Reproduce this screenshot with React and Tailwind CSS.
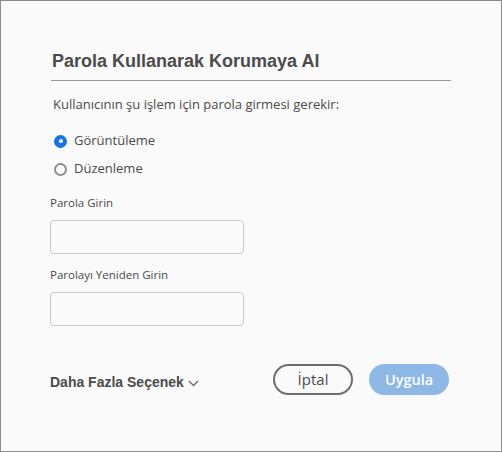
import { useState } from 'react'

const UI = "'Open Sans', 'Noto Sans', sans-serif"
const HEAD = "'Liberation Sans', Arial, sans-serif"

function Radio({ checked, label, onClick }) {
  return (
    <button type="button" onClick={onClick} className="flex items-center h-[28px] text-left">
      <span
        className={[
          'w-[13px] h-[13px] rounded-full box-border flex items-center justify-center ml-[4px]',
          checked ? 'bg-[#1473e6]' : 'border-2 border-[#8e8e8e] bg-[#fafafa]',
        ].join(' ')}
      >
        {checked && <span className="w-[4px] h-[4px] rounded-full bg-white" />}
      </span>
      <span className="ml-[7px] text-[13px] text-[#4b4b4b]">{label}</span>
    </button>
  )
}

export default function App() {
  const [mode, setMode] = useState('view')

  return (
    <div
      className="w-[502px] h-[452px] box-border border border-[#8c8c8c] bg-[#fafafa] pt-[48px] pl-[49px]"
      style={{ fontFamily: UI }}
    >
      <h1
        className="text-[18px] leading-[24px] font-bold text-[#4b4b4b] pl-[2px]"
        style={{ fontFamily: HEAD }}
      >
        Parola Kullanarak Korumaya Al
      </h1>
      <div className="mt-[7px] ml-[1px] w-[400px] h-px bg-[#9a9a9a]" />

      <p className="mt-[13px] ml-[3px] text-[13px] leading-[20px] text-[#4b4b4b]">
        Kullanıcının şu işlem için parola girmesi gerekir:
      </p>

      <div className="mt-[13px] flex flex-col">
        <Radio checked={mode === 'view'} label="Görüntüleme" onClick={() => setMode('view')} />
        <Radio checked={mode === 'edit'} label="Düzenleme" onClick={() => setMode('edit')} />
      </div>

      <label className="block mt-[12px] text-[11.5px] leading-[16px] text-[#4b4b4b]">Parola Girin</label>
      <input
        type="password"
        className="block mt-[9px] w-[194px] h-[34px] box-border rounded-[4px] border border-[#cacaca] bg-[#fafafa] px-2 outline-none"
      />

      <label className="block mt-[13px] text-[11.5px] leading-[16px] text-[#4b4b4b]">Parolayı Yeniden Girin</label>
      <input
        type="password"
        className="block mt-[9px] w-[194px] h-[34px] box-border rounded-[4px] border border-[#cacaca] bg-[#fafafa] px-2 outline-none"
      />

      <div className="mt-[38px] flex items-center w-[402px] pr-[1px]">
        <button
          type="button"
          className="flex items-center mt-[5px] text-[14px] font-bold text-[#4b4b4b]"
          style={{ fontFamily: HEAD }}
        >
          Daha Fazla Seçenek
          <svg width="11" height="7" viewBox="0 0 11 7" className="ml-[4px] mt-[2px]" aria-hidden="true">
            <path d="M1 1l4.5 4.5L10 1" fill="none" stroke="#6e6e6e" strokeWidth="1.5" />
          </svg>
        </button>
        <button
          type="button"
          className="ml-auto w-[80px] h-[31px] box-border rounded-full border-2 border-[#6e6e6e] text-[15px] text-[#4b4b4b] flex items-center justify-center"
        >
          İptal
        </button>
        <button
          type="button"
          className="ml-[16px] mr-[2px] w-[80px] h-[31px] rounded-full bg-[#8db8e6] text-[14.5px] font-semibold text-white flex items-center justify-center"
        >
          Uygula
        </button>
      </div>
    </div>
  )
}
